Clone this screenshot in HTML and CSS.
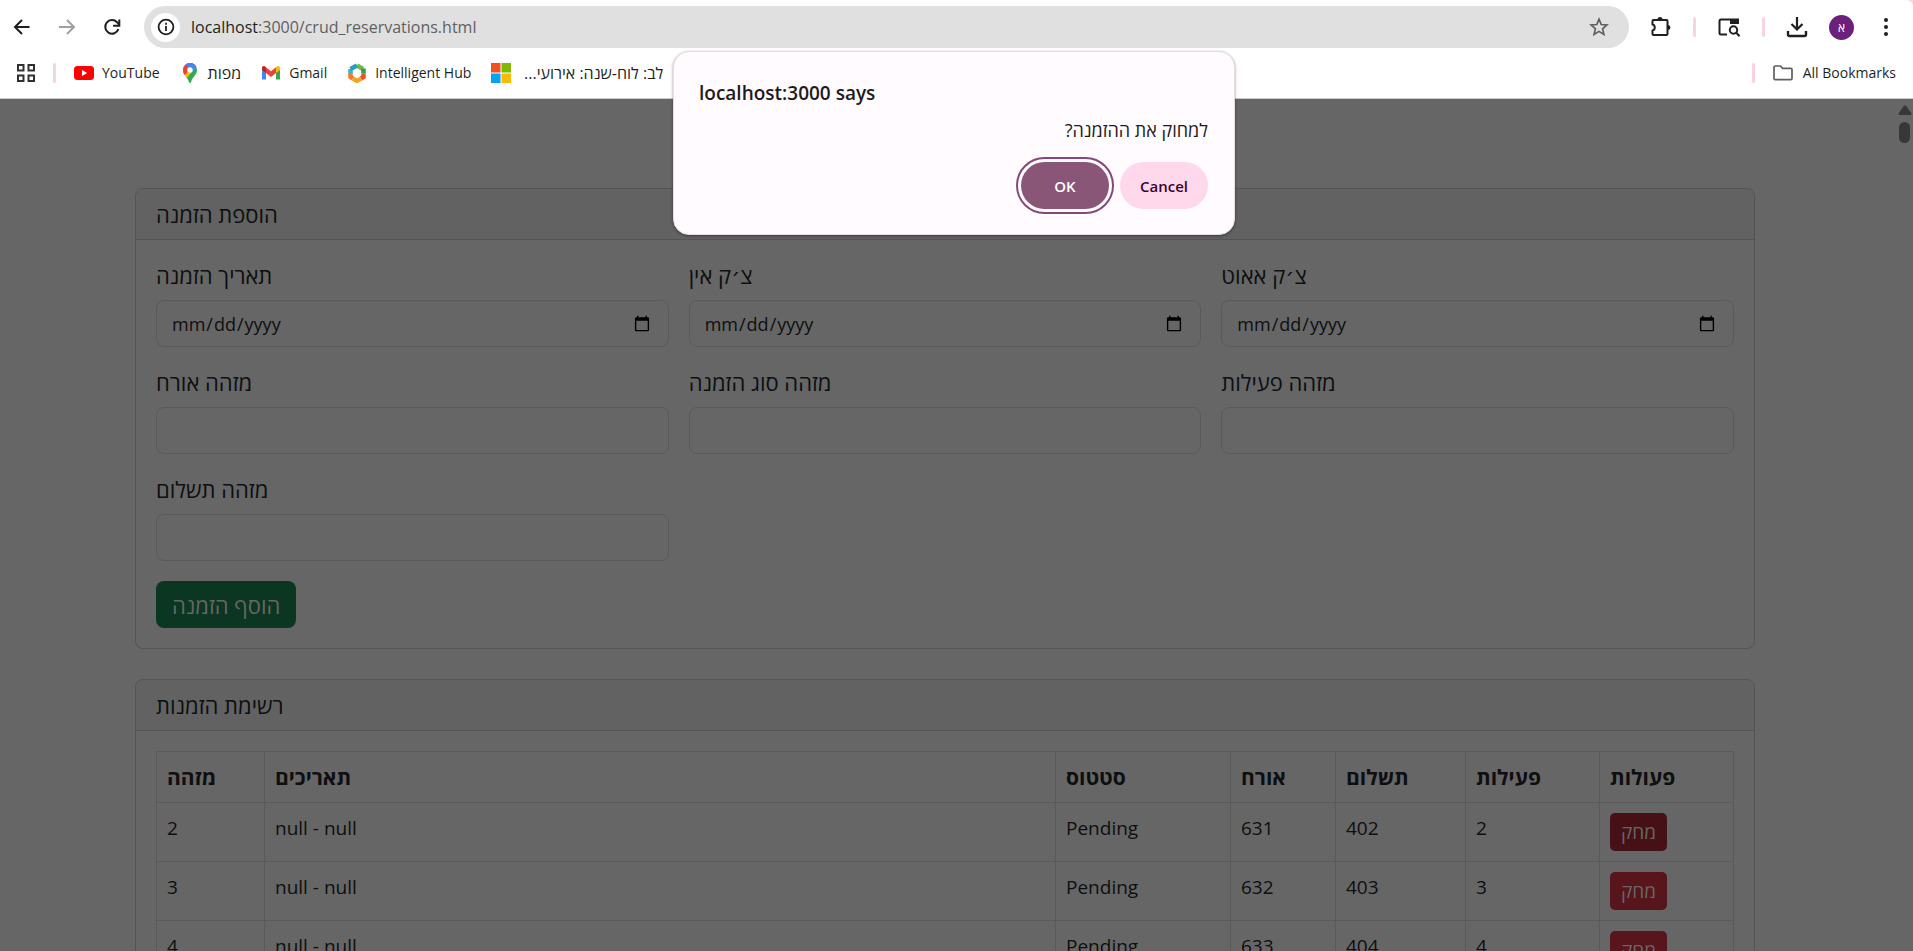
FILE: index.html
```html
<!DOCTYPE html>
<html lang="en">
<head>
<meta charset="utf-8">
<title>crud_reservations</title>
<link rel="stylesheet" href="styles.css">
</head>
<body>
<header class="browser">
  <div class="toolbar">
    <nav class="nav">
      <button class="icon-btn" aria-label="Back"><svg width="20" height="20" viewBox="0 0 20 20"><path d="M17.500 10H3.500M10 3L3 10l7 7" fill="none" stroke="#1f1f1f" stroke-width="2"/></svg></button>
      <button class="icon-btn" aria-label="Forward"><svg width="20" height="20" viewBox="0 0 20 20"><path d="M2 10h14.500M10 3l7 7-7 7" fill="none" stroke="#a0a0a0" stroke-width="2"/></svg></button>
      <button class="icon-btn" aria-label="Reload"><svg width="20" height="20" viewBox="0 0 20 20"><path d="M16.400 12.200A6.800 6.800 0 1 1 15 5.200L17 7.500" fill="none" stroke="#1f1f1f" stroke-width="2"/><path d="M17.300 2.500v6.200h-6.200" fill="none" stroke="#1f1f1f" stroke-width="2"/></svg></button>
    </nav>
    <div class="address">
      <button class="site-info" aria-label="Site information"><svg width="18" height="18" viewBox="0 0 18 18"><circle cx="9" cy="9" r="7.400" fill="none" stroke="#1f1f1f" stroke-width="1.800"/><path d="M9 8v5M9 4.800v1.900" stroke="#1f1f1f" stroke-width="1.800"/></svg></button>
      <span class="url"><span class="host">localhost</span>:3000/crud_reservations.html</span>
      <button class="star" aria-label="Bookmark this tab"><svg width="20" height="20" viewBox="0 0 20 20"><path d="M10 2.200l2.200 5.300 5.700.5-4.300 3.800 1.300 5.600-4.900-3-4.900 3 1.300-5.600L2.100 8l5.700-.5z" fill="none" stroke="#5f6062" stroke-width="1.700"/></svg></button>
    </div>
    <div class="actions">
      <button class="icon-btn" aria-label="Extensions"><svg width="22" height="22" viewBox="0 0 22 22"><path d="M3.500 4h13a1 1 0 0 1 1 1V18a1 1 0 0 1-1 1h-13a1 1 0 0 1-1-1v-3.500C5.500 14 5.500 9 2.500 8.500V5a1 1 0 0 1 1-1z" fill="none" stroke="#1f1f1f" stroke-width="2"/><path d="M7.500 3.500a2.500 2.500 0 0 1 5 0zM18 9a2.500 2.500 0 0 1 0 5z" fill="#1f1f1f"/></svg></button>
      <i class="sep"></i>
      <button class="icon-btn" aria-label="Search side panel"><svg width="24" height="22" viewBox="0 0 24 22"><path d="M10 18.500H4a1.500 1.500 0 0 1-1.500-1.500V5A1.500 1.500 0 0 1 4 3.500h17V8" fill="none" stroke="#1f1f1f" stroke-width="2"/><path d="M13 3h9v5h-9z" fill="#1f1f1f"/><circle cx="16.500" cy="14" r="3.700" fill="none" stroke="#1f1f1f" stroke-width="2"/><path d="M19 16.500l3.600 3.700" stroke="#1f1f1f" stroke-width="2"/></svg></button>
      <i class="sep"></i>
      <button class="icon-btn" aria-label="Downloads"><svg width="22" height="22" viewBox="0 0 22 22"><path d="M11 1v12M5.500 8l5.500 5.500L16.500 8" fill="none" stroke="#1f1f1f" stroke-width="2.200"/><path d="M2 15v3.500a1.500 1.500 0 0 0 1.500 1.500h15a1.500 1.500 0 0 0 1.500-1.500V15" fill="none" stroke="#1f1f1f" stroke-width="2.400"/></svg></button>
      <button class="avatar" aria-label="Profile">א</button>
      <button class="icon-btn" aria-label="Menu"><svg width="6" height="20" viewBox="0 0 6 20"><g fill="#1f1f1f"><circle cx="3" cy="3" r="2"/><circle cx="3" cy="10" r="2"/><circle cx="3" cy="17" r="2"/></g></svg></button>
    </div>
  </div>
  <div class="bookmarks">
    <button class="icon-btn" aria-label="Apps"><svg width="18" height="18" viewBox="0 0 18 18"><path d="M1 1h5.500v5.500H1zM11.500 1H17v5.500h-5.500zM1 11.500h5.500V17H1zM11.500 11.500H17V17h-5.500z" fill="none" stroke="#303033" stroke-width="2"/></svg></button>
    <i class="sep"></i>
    <div class="bookmark-list">
      <a class="bookmark" href="#"><svg width="20" height="20" viewBox="0 0 20 20"><rect y="3" width="20" height="14" rx="3.500" fill="#f00"/><path d="M8 7l5.200 3L8 13z" fill="#fff"/></svg>YouTube</a>
      <a class="bookmark he" href="#"><svg width="20" height="20" viewBox="0 0 20 20"><clipPath id="pin"><path d="M10 0a7 7 0 0 1 7 7c0 5-4.500 6.500-6 12.200-.3 1-1.700 1-2 0C7.500 13.500 3 12 3 7a7 7 0 0 1 7-7z"/></clipPath><g clip-path="url(#pin)"><path d="M0 0h20v20H0z" fill="#34a853"/><path d="M0 0h20L4 18z" fill="#fbbc04"/><path d="M0 0h16L3 14z" fill="#ea4335"/><path d="M5 0h15L10 8z" fill="#4285f4"/><path d="M8 -2h12v3l-9 9-4-4z" fill="#4285f4"/></g><circle cx="10" cy="7" r="2.700" fill="#fff"/></svg>מפות</a>
      <a class="bookmark" href="#"><svg width="20" height="20" viewBox="0 0 20 20"><path d="M1 5v11.500h4V9z" fill="#4285f4"/><path d="M19 5v11.500h-4V9z" fill="#34a853"/><path d="M15 4.500V10l4-3V5c0-2-2-2.700-3.500-1.300z" fill="#fbbc04"/><path d="M5 4.500V10L1 7V5c0-2 2-2.700 3.500-1.300z" fill="#c5221f"/><path d="M5 4.300l5 3.900 5-3.900V10l-5 3.900L5 10z" fill="#ea4335"/></svg>Gmail</a>
      <a class="bookmark" href="#"><svg width="20" height="20" viewBox="0 0 20 20"><g fill="none" stroke-width="4.500"><path d="M10 2.500l6 3.500" stroke="#7ab648"/><path d="M16.500 5.500v5" stroke="#2f9e57"/><path d="M16.500 10.500v3.500L14 15.500" stroke="#e4572e"/><path d="M14 15.800l-4 2-4-2" stroke="#f2a51f"/><path d="M6 15.500L3.500 14v-4" stroke="#ee7c2b"/><path d="M3.500 10.500V6" stroke="#35b6c9"/><path d="M3.500 6L10 2.500" stroke="#2a9fb5"/></g></svg>Intelligent Hub</a>
      <a class="bookmark he" href="#"><svg width="20" height="20" viewBox="0 0 20 20"><path d="M0 0h9.500v9.500H0z" fill="#f25022"/><path d="M10.500 0H20v9.500h-9.500z" fill="#7fba00"/><path d="M0 10.500h9.500V20H0z" fill="#00a4ef"/><path d="M10.500 10.500H20V20h-9.500z" fill="#ffb900"/></svg><span class="clipped" dir="rtl">לב: לוח-שנה: אירועי...</span></a>
    </div>
    <i class="sep"></i>
    <a class="bookmark all" href="#"><svg width="20" height="20" viewBox="0 0 20 20"><path d="M1 4.200a1.200 1.200 0 0 1 1.200-1.200h5.300l2 2.300h8.300A1.200 1.200 0 0 1 19 6.500v9a1.200 1.200 0 0 1-1.200 1.200H2.200A1.200 1.200 0 0 1 1 15.500z" fill="none" stroke="#5f6062" stroke-width="1.700"/></svg>All Bookmarks</a>
  </div>
</header>

<div class="viewport">
  <main class="page">
    <section class="card">
      <div class="card-header">הוספת הזמנה</div>
      <form class="card-body form-grid">
        <div class="field"><label for="d1">תאריך הזמנה</label><input id="d1" type="date"></div>
        <div class="field"><label for="d2">צ׳ק אין</label><input id="d2" type="date"></div>
        <div class="field"><label for="d3">צ׳ק אאוט</label><input id="d3" type="date"></div>
        <div class="field"><label for="f1">מזהה אורח</label><input id="f1" type="text"></div>
        <div class="field"><label for="f2">מזהה סוג הזמנה</label><input id="f2" type="text"></div>
        <div class="field"><label for="f3">מזהה פעילות</label><input id="f3" type="text"></div>
        <div class="field"><label for="f4">מזהה תשלום</label><input id="f4" type="text"></div>
        <div class="form-actions"><button type="button" class="btn-add">הוסף הזמנה</button></div>
      </form>
    </section>

    <section class="card">
      <div class="card-header">רשימת הזמנות</div>
      <div class="card-body">
        <table class="list">
          <colgroup><col class="c-id"><col><col class="c-status"><col class="c-guest"><col class="c-pay"><col class="c-act"><col class="c-act"></colgroup>
          <thead><tr><th>מזהה</th><th>תאריכים</th><th>סטטוס</th><th>אורח</th><th>תשלום</th><th>פעילות</th><th>פעולות</th></tr></thead>
          <tbody>
            <tr><td>2</td><td>null - null</td><td>Pending</td><td>631</td><td>402</td><td>2</td><td><button class="btn-delete active">מחק</button></td></tr>
            <tr><td>3</td><td>null - null</td><td>Pending</td><td>632</td><td>403</td><td>3</td><td><button class="btn-delete">מחק</button></td></tr>
            <tr><td>4</td><td>null - null</td><td>Pending</td><td>633</td><td>404</td><td>4</td><td><button class="btn-delete">מחק</button></td></tr>
          </tbody>
        </table>
      </div>
    </section>
  </main>
  <div class="scrollbar">
    <svg width="14" height="10" viewBox="0 0 14 10"><path d="M5.800 1a1.500 1.500 0 0 1 2.400 0l4.600 6.500A1.400 1.400 0 0 1 11.600 10H2.400A1.400 1.400 0 0 1 1.200 7.500z" fill="#373737"/></svg>
    <div class="thumb"></div>
  </div>
</div>

<div class="dialog-layer">
  <div class="dialog" role="dialog" aria-labelledby="dlg-title">
    <h1 class="dialog-title" id="dlg-title">localhost:3000 says</h1>
    <p class="dialog-text" dir="rtl">למחוק את ההזמנה?</p>
    <div class="dialog-actions">
      <button class="dlg-btn ok">OK</button>
      <button class="dlg-btn cancel">Cancel</button>
    </div>
  </div>
</div>
</body>
</html>
```
FILE: styles.css
```css
* { box-sizing: border-box; }

body {
  margin: 0;
  height: 100vh;
  display: flex;
  flex-direction: column;
  overflow: hidden;
  position: relative;
  background: #f8d3e4;
  font-family: "Open Sans", "Noto Sans", "DejaVu Sans", sans-serif;
}

button { font: inherit; border: 0; padding: 0; background: none; }
svg { display: block; flex: none; }

/* Browser chrome */
.browser {
  background: #fff;
  border-bottom: 1px solid #c9c9c9;
  border-top-right-radius: 6px;
  color: #1f1f1f;
}
.toolbar { display: flex; align-items: center; padding: 6px 24px 0 12px; }
.nav { display: flex; gap: 25px; width: 132px; }
.icon-btn { display: flex; align-items: center; justify-content: center; }
.address {
  flex: 1;
  display: flex;
  align-items: center;
  height: 42px;
  padding: 0 20px 0 7px;
  border-radius: 21px;
  background: #e0e0e0;
}
.site-info {
  display: flex;
  align-items: center;
  justify-content: center;
  width: 29px;
  height: 29px;
  border-radius: 50%;
  background: #fff;
}
.url { flex: 1; padding-left: 11px; font-size: 16px; line-height: 24px; color: #5f6062; }
.host { color: #1f1f1f; }
.actions { display: flex; align-items: center; gap: 21px; padding-left: 21px; }
.sep { width: 3px; height: 20px; border-radius: 2px; background: #f8d3e4; }
.avatar {
  width: 25px;
  height: 25px;
  border-radius: 50%;
  background: #6b217c;
  color: #fff;
  font-size: 12px;
  line-height: 25px;
}
.actions .avatar { margin-right: 8px; }

.bookmarks {
  display: flex;
  align-items: center;
  gap: 18px;
  height: 50px;
  padding: 0 17px 1px;
  font-size: 14px;
}
.bookmark-list { flex: 1; display: flex; align-items: center; gap: 20px; }
.bookmark {
  display: flex;
  align-items: center;
  gap: 8px;
  color: #1f1f1f;
  line-height: 20px;
  text-decoration: none;
  white-space: nowrap;
}
.he { font-size: 16px; }
.all { gap: 10px; }
.clipped { width: 144px; }

/* Dimmed page */
.viewport { flex: 1; min-height: 0; display: flex; overflow: hidden; background: #666; }
.page {
  flex: 1;
  padding: 89px 15px 0;
  color: #0d0f10;
  font-size: 22px;
  line-height: 30px;
}
.card {
  max-width: 1620px;
  margin: 0 auto 30px;
  border: 1px solid #545454;
  border-radius: 8px;
}
.card-header {
  padding: 10px 20px;
  border-bottom: 1px solid #545454;
  border-radius: 7px 7px 0 0;
  background: #626262;
}
.card-body { padding: 20px; }
.form-grid { display: grid; grid-template-columns: repeat(3, 1fr); gap: 20px; margin: 0; }
.field { display: flex; flex-direction: column; gap: 10px; }
.field input {
  width: 100%;
  height: 47px;
  padding: 7px 15px 7px 14px;
  border: 1px solid #595a5c;
  border-radius: 8px;
  background: transparent;
  color: #0d0f10;
  font: inherit;
  font-size: 18px;
}
.form-actions { grid-column: 1 / -1; display: flex; }
.btn-add {
  height: 47px;
  padding: 0 16px;
  border-radius: 8px;
  background: #0a3622;
  color: #666;
}

.list { width: 100%; border-collapse: collapse; table-layout: fixed; font-size: 19px; }
.list th, .list td {
  padding: 10px;
  border: 1px solid #595a5c;
  text-align: left;
  vertical-align: top;
}
.list th { font-size: 21px; font-weight: 700; }
.c-id { width: 108px; }
.c-status { width: 175px; }
.c-guest { width: 105px; }
.c-pay { width: 130px; }
.c-act { width: 134px; }
.btn-delete {
  display: block;
  height: 38px;
  padding: 0 11px;
  border-radius: 5px;
  background: #58151c;
  color: #666;
}
.btn-delete.active { background: #461116; }

.scrollbar {
  width: 23px;
  padding: 6px 2px 0 8px;
  display: flex;
  flex-direction: column;
  align-items: center;
  gap: 7px;
}
.thumb { width: 11px; height: 21px; border-radius: 6px; background: #373737; }

/* Confirm dialog */
.dialog-layer {
  position: absolute;
  top: 51px;
  left: 0;
  right: 5px;
  display: flex;
  justify-content: center;
}
.dialog {
  width: 562px;
  padding: 26px 26px 25px 25px;
  border: 1px solid #e8dbe3;
  border-radius: 16px;
  background: #fffbff;
  box-shadow: 0 1px 3px rgba(0, 0, 0, 0.4);
  color: #1f1a1d;
}
.dialog-title { margin: 0; font-size: 19px; font-weight: 600; line-height: 30px; }
.dialog-text { margin: 10px 0 20px; font-size: 18px; line-height: 24px; }
.dialog-actions { display: flex; justify-content: flex-end; gap: 11px; }
.dlg-btn {
  width: 88px;
  height: 47px;
  border-radius: 24px;
  font-size: 15px;
  font-weight: 600;
}
.ok { background: #8a5678; color: #fff; outline: 2px solid #84497a; outline-offset: 3px; }
.cancel { background: #ffd8ec; color: #37072f; }
```
